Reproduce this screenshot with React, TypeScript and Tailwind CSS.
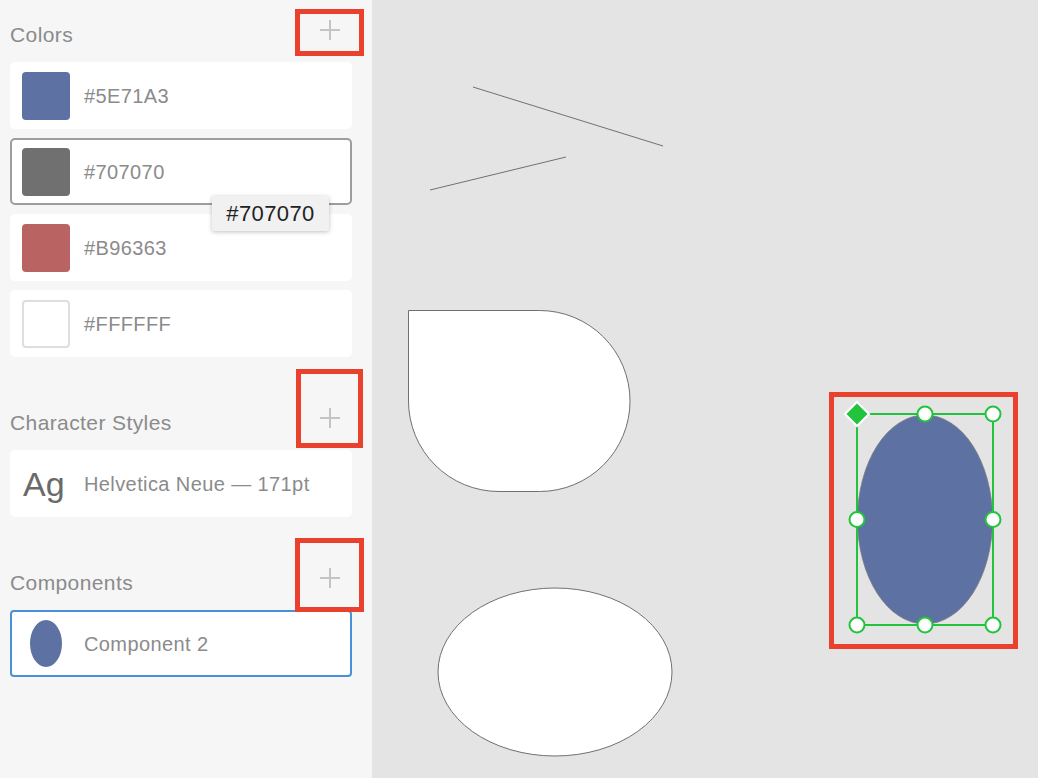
import React from "react";

const font = { fontFamily: '"Liberation Sans", Arial, sans-serif' };

const colors = [
  { hex: "#5E71A3", swatch: "bg-[#5e71a3]" },
  { hex: "#707070", swatch: "bg-[#707070]", selected: true },
  { hex: "#B96363", swatch: "bg-[#b96363]" },
  { hex: "#FFFFFF", swatch: "bg-white border-2 border-[#dedede]" },
];

function Plus() {
  return (
    <svg width="20" height="20" viewBox="0 0 20 20" className="mb-[10px] mr-[12px]">
      <path d="M10 0v20M0 10h20" stroke="#c4c4c4" strokeWidth="2" />
    </svg>
  );
}

function Header({ title, box }: { title: string; box: string }) {
  return (
    <div className="relative flex h-[40px] w-[342px] items-center justify-between">
      <span className="text-[21px] tracking-[0.4px] text-[#8b8b8b]">{title}</span>
      <Plus />
      <div className={`absolute border-[5px] border-[#e9412e] ${box}`} />
    </div>
  );
}

export default function App() {
  return (
    <div className="flex h-[778px] w-[1038px] overflow-hidden" style={font}>
      <div className="relative flex w-[372px] shrink-0 flex-col bg-[#f6f6f6] pl-[10px] pt-[15px]">
        <Header title="Colors" box="left-[285px] top-[-6px] h-[47px] w-[69px]" />
        <div className="mt-[7px] flex flex-col gap-[9px]">
          {colors.map((c) => (
            <div
              key={c.hex}
              className={`flex h-[67px] w-[342px] items-center rounded-[5px] bg-white ${
                c.selected ? "border-2 border-[#9d9d9d] pl-[10px]" : "pl-[12px]"
              }`}
            >
              <div className={`h-[48px] w-[48px] rounded-[4px] ${c.swatch}`} />
              <span className="ml-[14px] text-[20px] tracking-[0.4px] text-[#8b8b8b]">{c.hex}</span>
            </div>
          ))}
        </div>

        <div className="mt-[46px]">
          <Header title="Character Styles" box="left-[286px] top-[-34px] h-[79px] w-[67px]" />
        </div>
        <div className="mt-[7px] flex h-[67px] w-[342px] items-center rounded-[5px] bg-white pl-[13px]">
          <span className="w-[61px] text-[34px] leading-none text-[#6a6a6a]">Ag</span>
          <span className="text-[20px] tracking-[0.4px] text-[#8b8b8b]">Helvetica Neue — 171pt</span>
        </div>

        <div className="mt-[46px]">
          <Header title="Components" box="left-[285px] top-[-25px] h-[74px] w-[69px]" />
        </div>
        <div className="mt-[7px] flex h-[67px] w-[342px] items-center rounded-[4px] border-2 border-[#4a90d9] bg-white pl-[18px]">
          <div className="h-[47px] w-[32px] rounded-[50%] bg-[#5e71a3]" />
          <span className="ml-[22px] text-[20px] tracking-[0.4px] text-[#8b8b8b]">Component 2</span>
        </div>

        <div className="absolute left-[212px] top-[196px] flex h-[35px] w-[117px] items-center justify-center rounded-[2px] bg-[#f1f1f1] text-[22px] tracking-[0.4px] text-[#222] shadow-[0_1px_4px_rgba(0,0,0,0.25)]">
          #707070
        </div>
      </div>

      <div className="relative flex-1 bg-[#e4e4e4]">
        <svg className="absolute inset-0" width="666" height="778" viewBox="372 0 666 778">
          <line x1="473" y1="87" x2="663" y2="146" stroke="#707070" strokeWidth="1" />
          <line x1="430" y1="190" x2="566" y2="157" stroke="#707070" strokeWidth="1" />
          <path
            d="M408.5 310.5 H539.5 A90.5 90.5 0 0 1 539.5 491.5 H499 A90.5 90.5 0 0 1 408.5 401 Z"
            fill="#fff"
            stroke="#707070"
            strokeWidth="1"
          />
          <ellipse cx="555" cy="672" rx="117" ry="84" fill="#fff" stroke="#707070" strokeWidth="1" />

          <ellipse cx="925" cy="519.5" rx="67.5" ry="104.5" fill="#5e71a3" stroke="#7a7a7a" strokeWidth="0.75" />
          <rect x="857" y="414" width="136" height="211" fill="none" stroke="#22c43e" strokeWidth="2" />
          {[
            [925, 414],
            [993, 414],
            [857, 519.5],
            [993, 519.5],
            [857, 625],
            [925, 625],
            [993, 625],
          ].map(([x, y]) => (
            <circle key={`${x}-${y}`} cx={x} cy={y} r="7.5" fill="#fff" stroke="#22c43e" strokeWidth="2" />
          ))}
          <path d="M857 402 L869 414 L857 426 L845 414 Z" fill="#22c43e" stroke="#fff" strokeWidth="2" />
        </svg>
        <div className="absolute left-[457px] top-[392px] h-[257px] w-[189px] border-[5px] border-[#e9412e]" />
      </div>
    </div>
  );
}
